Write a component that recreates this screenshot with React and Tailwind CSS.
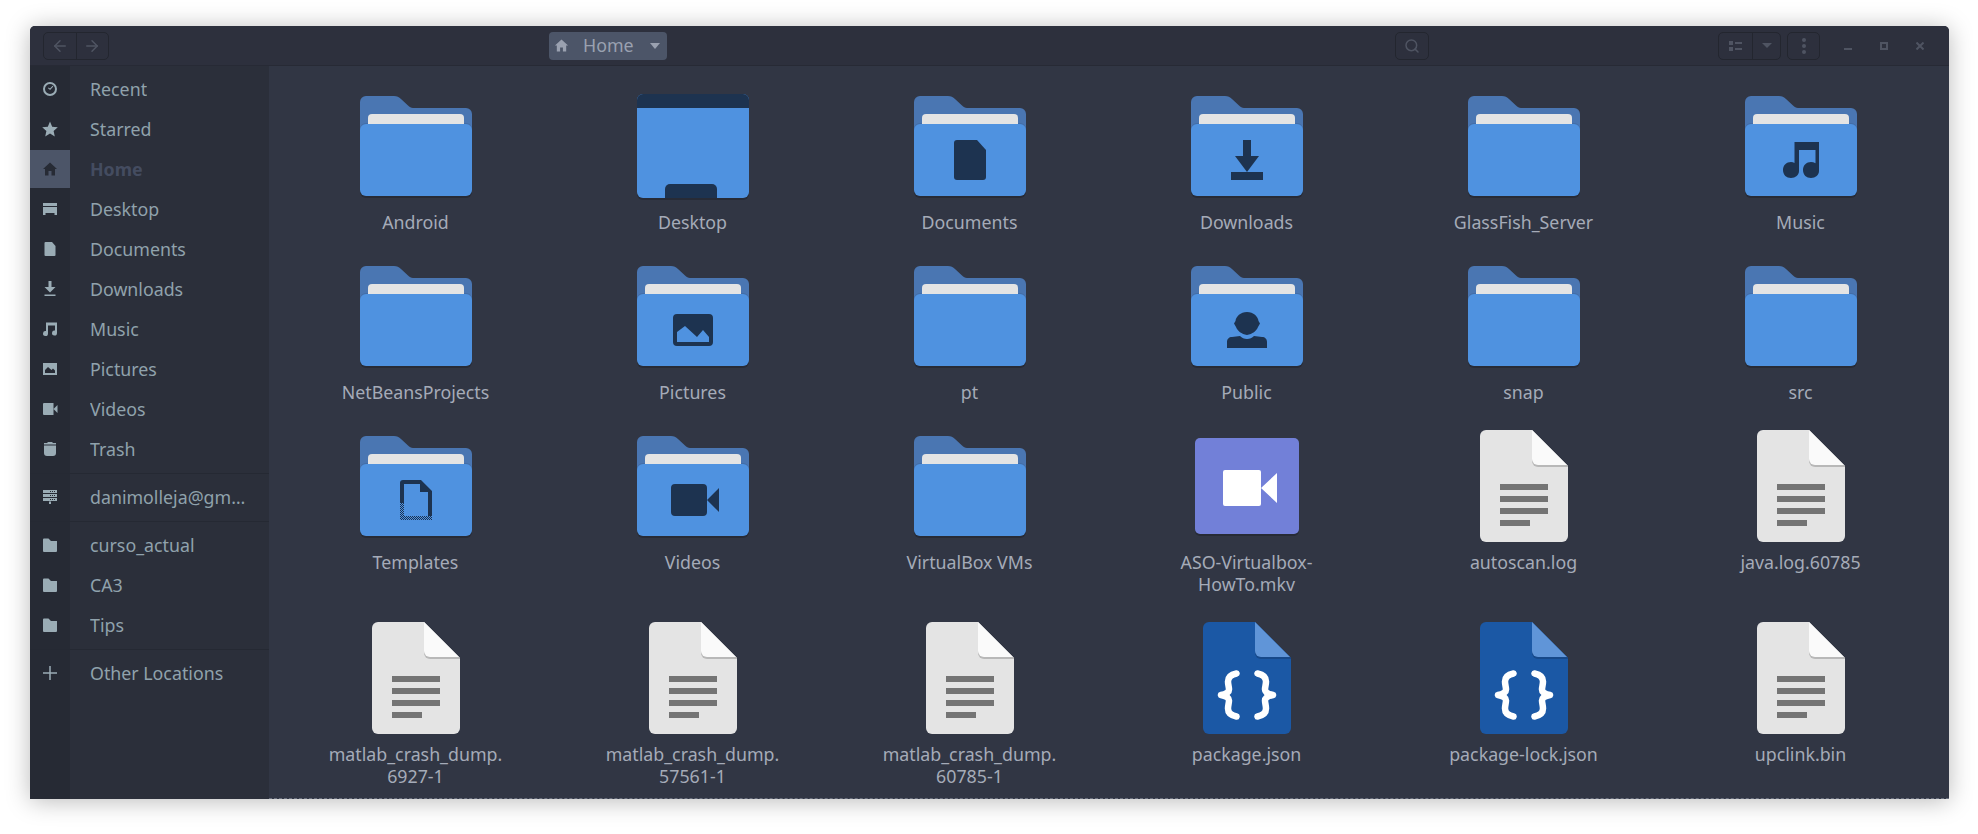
import React from 'react';
import { ArrowLeft, ArrowRight, Search } from 'lucide-react';

const font = { fontFamily: '"Noto Sans", sans-serif' };

const NAVY = '#1d3350';

function Folder({ glyph }) {
  return (
    <svg width="112" height="112" viewBox="0 0 112 112">
      <path d="M0 12a6 6 0 0 1 6-6h28c3 0 5 1 7 3l7 6.500c1.500 1.500 3 2.500 5 2.500h53a6 6 0 0 1 6 6v72H0z" fill="#4a76b2" />
      <path d="M0 39a6 6 0 0 1 6-6h100a6 6 0 0 1 6 6v6H0z" fill="#436ca6" />
      <path d="M8 38V28a4 4 0 0 1 4-4h88a4 4 0 0 1 4 4v10z" fill="#e4e4e4" />
      <rect x="0" y="90" width="112" height="18" rx="6" fill="#272b36" />
      <rect x="0" y="34" width="112" height="72" rx="6" fill="#4f92e0" />
      {glyph}
    </svg>
  );
}

function DesktopFolder() {
  return (
    <svg width="112" height="112" viewBox="0 0 112 112">
      <rect x="0" y="90" width="112" height="20" rx="6" fill="#272b36" />
      <rect x="0" y="4" width="112" height="104" rx="6" fill="#4f92e0" />
      <path d="M0 18v-8a6 6 0 0 1 6-6h100a6 6 0 0 1 6 6v8z" fill={NAVY} />
      <path d="M28 108V99a5 5 0 0 1 5-5h42a5 5 0 0 1 5 5v9z" fill={NAVY} />
    </svg>
  );
}

const glyphs = {
  documents: <path d="M40 53a3 3 0 0 1 3-3h20l9 10v27a3 3 0 0 1-3 3H43a3 3 0 0 1-3-3z" fill={NAVY} />,
  downloads: <path d="M52 50h8v16h8L56 82 44 66h8zM40 82h32v8H40z" fill={NAVY} />,
  music: <path d="M49.500 52H74v29c0 4-3.500 7-8 7s-8-3-8-8 3.500-8 8-8c1.600 0 3 .4 4.500 1.200V60H54v21c0 4-3.500 7-8 7s-8-3-8-8 3.500-8 8-8c1.300 0 2.500.3 3.500 1z" fill={NAVY} />,
  pictures: (
    <path fillRule="evenodd" d="M36 58a4 4 0 0 1 4-4h32a4 4 0 0 1 4 4v24a4 4 0 0 1-4 4H40a4 4 0 0 1-4-4zM40 82h32v-5l-6-7-6 7-12-11-8 6z" fill={NAVY} />
  ),
  public: (
    <path d="M56 52c6.500 0 11 4.500 11.500 9l1.500 2.500-2 3.500c-1.500 4-5.500 7-11 8-5.500-1-9.500-4-11-8l-2-3.500 1.500-2.500C45 56.500 49.500 52 56 52zM36 88v-6c0-3 2-5 5-5l8-1c2 2 4 3 7 3s5-1 7-3l8 1c3 0 5 2 5 5v6z" fill={NAVY} />
  ),
  templates: (
    <>
      <defs>
        <pattern id="dither" width="2" height="2" patternUnits="userSpaceOnUse">
          <rect width="1" height="1" fill={NAVY} />
          <rect x="1" y="1" width="1" height="1" fill={NAVY} />
        </pattern>
      </defs>
      <path d="M40 73V53a3 3 0 0 1 3-3h18l11 11v25h-4V62H60V54H44v19z" fill={NAVY} />
      <path d="M40 73h4v13h28v4H40z" fill="url(#dither)" />
    </>
  ),
  videos: <path d="M34 58a4 4 0 0 1 4-4h28a4 4 0 0 1 4 4v24a4 4 0 0 1-4 4H38a4 4 0 0 1-4-4zM70 70l12-12v24z" fill={NAVY} />,
};

function VideoFile() {
  return (
    <svg width="112" height="112" viewBox="0 0 112 112">
      <rect x="4" y="9" width="104" height="97" rx="5" fill="#272b36" />
      <rect x="4" y="8" width="104" height="96" rx="5" fill="#7280d8" />
      <path d="M32 42a2 2 0 0 1 2-2h34a2 2 0 0 1 2 2v32a2 2 0 0 1-2 2H34a2 2 0 0 1-2-2zM70 58l16-15v30z" fill="#ffffff" />
    </svg>
  );
}

function TextFile() {
  return (
    <svg width="112" height="112" viewBox="0 0 112 112">
      <path d="M12 6a6 6 0 0 1 6-6h46l36 36v70a6 6 0 0 1-6 6H18a6 6 0 0 1-6-6z" fill="#e4e4e4" />
      <path d="M64 0v31a6 6 0 0 0 6 6h30v-1L64 0z" fill="#b8b8b8" />
      <path d="M64 0v29a6 6 0 0 0 6 6h29z" fill="#fafafa" />
      <path d="M32 54h48v6H32zM32 66h48v6H32zM32 78h48v6H32zM32 90h30v6H32z" fill="#747474" />
    </svg>
  );
}

function JsonFile() {
  return (
    <svg width="112" height="112" viewBox="0 0 112 112">
      <path d="M12 6a6 6 0 0 1 6-6h46l36 36v70a6 6 0 0 1-6 6H18a6 6 0 0 1-6-6z" fill="#1b58a5" />
      <path d="M64 0v31a6 6 0 0 0 6 6h30v-1L64 0z" fill="#17498a" />
      <path d="M64 0v29a6 6 0 0 0 6 6h29z" fill="#6095d8" />
      <path d="M45.500 51.500c-5 1-8.500 3-8.500 8 0 3 1 5.500 1 8s-3 4.500-8 5.500c5 1 8 3 8 5.500s-1 5-1 8c0 5 3.500 7 8.500 8M66.500 51.500c5 1 8.500 3 8.500 8 0 3-1 5.500-1 8s3 4.500 8 5.500c-5 1-8 3-8 5.500s1 5 1 8c0 5-3.500 7-8.500 8" fill="none" stroke="#ffffff" strokeWidth="6.500" strokeLinecap="round" strokeLinejoin="round" />
    </svg>
  );
}

const items = [
  ['Android'], ['Desktop', 'desktop'], ['Documents', 'documents'], ['Downloads', 'downloads'], ['GlassFish_Server'], ['Music', 'music'],
  ['NetBeansProjects'], ['Pictures', 'pictures'], ['pt'], ['Public', 'public'], ['snap'], ['src'],
  ['Templates', 'templates'], ['Videos', 'videos'], ['VirtualBox VMs'], ['ASO-Virtualbox-\nHowTo.mkv', 'video'], ['autoscan.log', 'text'], ['java.log.60785', 'text'],
  ['matlab_crash_dump.\n6927-1', 'text'], ['matlab_crash_dump.\n57561-1', 'text'], ['matlab_crash_dump.\n60785-1', 'text'], ['package.json', 'json'], ['package-lock.json', 'json'], ['upclink.bin', 'text'],
];

function FileIcon({ kind }) {
  if (kind === 'desktop') return <DesktopFolder />;
  if (kind === 'video') return <VideoFile />;
  if (kind === 'text') return <TextFile />;
  if (kind === 'json') return <JsonFile />;
  return <Folder glyph={glyphs[kind]} />;
}

const sideIcons = {
  recent: <path fillRule="evenodd" d="M8 1a7 7 0 1 0 0 14A7 7 0 0 0 8 1zm0 2a5 5 0 1 1 0 10A5 5 0 0 1 8 3zm2.600 1.800L8 7.500 6.600 6.500 6 7.300 8.100 9l3.200-3.500z" />,
  star: <path d="M8 .5l2.200 5.200 5.600.5-4.200 3.700 1.200 5.500L8 12.500l-4.800 2.900 1.200-5.500L.2 6.200l5.600-.5z" />,
  home: <path d="M8 1.500l7 6.500h-2v6.500h-3.500V10h-3v4.500H3V8H1z" />,
  desktop: <path d="M1 2h14v3H1zM1 6h14v8h-2.500v-2h-9v2H1z" />,
  doc: <path d="M2.500 2a1 1 0 0 1 1-1h6.500l3.500 4v9a1 1 0 0 1-1 1h-9a1 1 0 0 1-1-1z" />,
  download: <path d="M6.500 0h3v6H13.500L8 11.500 2.500 6h4zM2.500 13.500h11V15h-11z" />,
  music: <path d="M4 1.500h11V12a2.500 2.500 0 1 1-2-2.400V4.500H6V12.500a2.500 2.500 0 1 1-2-2.400z" />,
  pictures: <path fillRule="evenodd" d="M1 2h14v12H1zM3 12h10V9.500L11 7.500 9.500 9 6 6 3 9z" />,
  video: <path d="M1 3a1 1 0 0 1 1-1h9.500v12H2a1 1 0 0 1-1-1zM11.500 8L15.500 4v8z" />,
  trash: <path d="M6 1h4l1 1h3v1.500H2V2h3zM2 4.500h12V12a3 3 0 0 1-3 3H5a3 3 0 0 1-3-3z" />,
  network: <path fillRule="evenodd" d="M1 1h14v3H1zM1 5h14v3H1zM1 9h14v3H1zM7 12.500h2V15H7zM8 2h1v1H8zM10 2h1v1h-1zM12 2h1v1h-1zM8 6h1v1H8zM10 6h1v1h-1zM12 6h1v1h-1zM8 10h1v1H8zM10 10h1v1h-1zM12 10h1v1h-1z" />,
  folder: <path d="M1 2.500a1 1 0 0 1 1-1h4.500l2.500 2.500h6v10a1 1 0 0 1-1 1H2a1 1 0 0 1-1-1z" />,
  plus: <path d="M7.250 1h1.500v6.250H15v1.500H8.750V15h-1.500V8.750H1v-1.500h6.250z" />,
};

function SideRow({ icon, label, active }) {
  return (
    <div className="mb-[2px] flex h-[38px] items-center">
      <div className={`flex h-[38px] w-10 shrink-0 items-center justify-center ${active ? 'bg-[#4c5568] text-[#272b35]' : 'text-[#9aacb5]'}`}>
        <svg width="16" height="16" viewBox="0 0 16 16" fill="currentColor">{sideIcons[icon]}</svg>
      </div>
      <span className={`ml-[20px] truncate text-[17.8px] ${active ? 'font-bold text-[#444c60]' : 'text-[#90a2ac]'}`}>{label}</span>
    </div>
  );
}

function Sep() {
  return <div className="mb-[4px] mt-[5px] h-px bg-[#252933]" />;
}

function HeaderBtn({ className, children }) {
  return <div className={`flex h-7 items-center justify-center rounded-[5px] border border-[#23262f] ${className}`}>{children}</div>;
}

export default function App() {
  return (
    <div className="h-[834px] w-[1978px] overflow-hidden bg-white pl-[30px] pt-[26px]" style={font}>
      <div className="flex h-[773px] w-[1919px] flex-col overflow-hidden rounded-t-[5px] bg-[#313644] shadow-[0_2px_24px_rgba(0,0,0,0.28)]">
        <header className="flex h-10 shrink-0 items-center border-b border-[#272a35] bg-[#2d303d] pl-[13px]">
          <HeaderBtn className="w-[66px] text-[#4f5462]">
            <div className="flex flex-1 justify-center"><ArrowLeft size={18} strokeWidth={2} /></div>
            <div className="h-full w-px bg-[#23262f]" />
            <div className="flex flex-1 justify-center"><ArrowRight size={18} strokeWidth={2} /></div>
          </HeaderBtn>
          <div className="ml-[440px] flex h-7 w-[118px] items-center rounded-[4px] bg-[#4c5568] text-[#9aa1b0]">
            <svg className="ml-[5px]" width="15" height="15" viewBox="0 0 16 16" fill="currentColor">{sideIcons.home}</svg>
            <span className="ml-[14px] text-[17.8px]">Home</span>
            <svg className="ml-[16px]" width="10" height="6" viewBox="0 0 10 6" fill="currentColor"><path d="M0 0h10L5 6z" /></svg>
          </div>
          <HeaderBtn className="ml-[728px] w-[34px] text-[#4f5462]"><Search size={16} strokeWidth={2.25} /></HeaderBtn>
          <HeaderBtn className="ml-[289px] w-[63px] text-[#4f5462]">
            <div className="flex w-[33px] justify-center">
              <svg width="13" height="12" viewBox="0 0 13 12" fill="currentColor"><path d="M0 1h4v4H0zM6 2h7v2H6zM0 7h4v4H0zM6 8h7v2H6z" /></svg>
            </div>
            <div className="h-full w-px bg-[#23262f]" />
            <div className="flex flex-1 justify-center">
              <svg width="10" height="5" viewBox="0 0 10 5" fill="currentColor"><path d="M0 0h10L5 5z" /></svg>
            </div>
          </HeaderBtn>
          <HeaderBtn className="ml-[6px] w-[33px] text-[#4f5462]">
            <svg width="4" height="16" viewBox="0 0 4 16" fill="currentColor"><circle cx="2" cy="2" r="2" /><circle cx="2" cy="8" r="2" /><circle cx="2" cy="14" r="2" /></svg>
          </HeaderBtn>
          <div className="ml-[24px] flex items-center gap-[28px] text-[#4f5462]">
            <svg width="8" height="8" viewBox="0 0 8 8" fill="currentColor"><path d="M0 6h8v2H0z" /></svg>
            <svg width="8" height="8" viewBox="0 0 8 8" fill="none" stroke="currentColor" strokeWidth="2"><rect x="1" y="1" width="6" height="6" /></svg>
            <svg width="8" height="8" viewBox="0 0 8 8" fill="none" stroke="currentColor" strokeWidth="2"><path d="M0.500 0.500l7 7M7.500 0.500l-7 7" /></svg>
          </div>
        </header>

        <div className="flex min-h-0 flex-1">
          <aside className="relative w-[239px] shrink-0 bg-[#2b2f3a] pt-1">
            <div className="absolute inset-y-0 left-0 w-10 bg-[#262a34]" />
            <div className="relative">
              <SideRow icon="recent" label="Recent" />
              <SideRow icon="star" label="Starred" />
              <SideRow icon="home" label="Home" active />
              <SideRow icon="desktop" label="Desktop" />
              <SideRow icon="doc" label="Documents" />
              <SideRow icon="download" label="Downloads" />
              <SideRow icon="music" label="Music" />
              <SideRow icon="pictures" label="Pictures" />
              <SideRow icon="video" label="Videos" />
              <SideRow icon="trash" label="Trash" />
              <Sep />
              <SideRow icon="network" label="danimolleja@gm…" />
              <Sep />
              <SideRow icon="folder" label="curso_actual" />
              <SideRow icon="folder" label="CA3" />
              <SideRow icon="folder" label="Tips" />
              <Sep />
              <SideRow icon="plus" label="Other Locations" />
            </div>
          </aside>

          <main className="min-w-0 flex-1 border-b border-dashed border-[#6b7180] pl-2 pr-[10px] pt-6">
            <div className="grid grid-cols-6 gap-y-[27px]">
              {items.map(([name, kind]) => (
                <div key={name} className="flex flex-col items-center">
                  <FileIcon kind={kind} />
                  <span className="mt-[9px] whitespace-pre-line text-center text-[17.8px] leading-[22px] text-[#a5abb8]">{name}</span>
                </div>
              ))}
            </div>
          </main>
        </div>
      </div>
    </div>
  );
}
